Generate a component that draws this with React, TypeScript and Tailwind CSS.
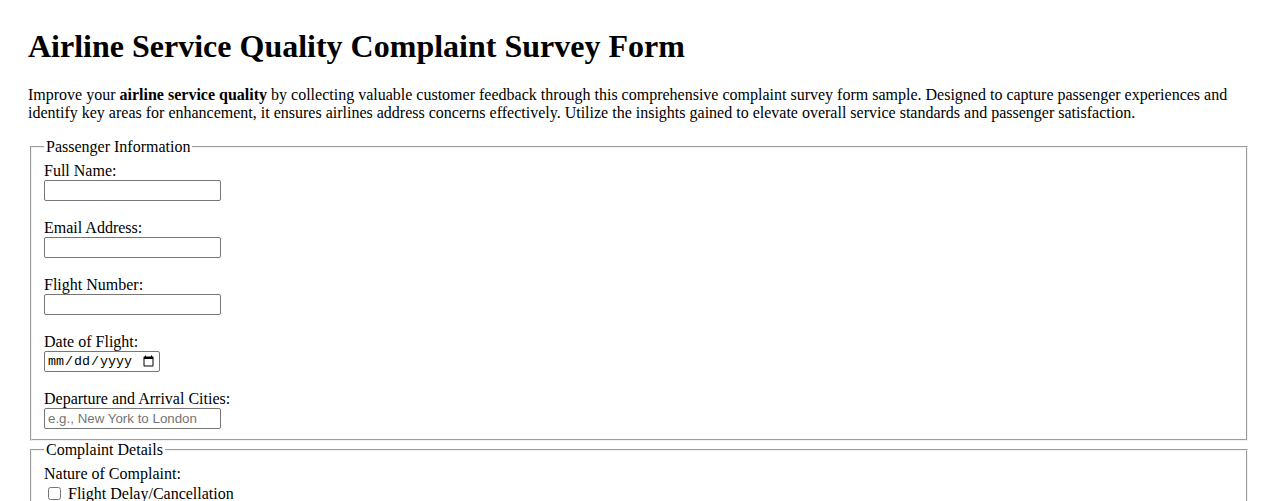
const serif = "font-['Liberation_Serif','Times_New_Roman',serif]";

const inputCls =
  "block h-[21px] w-[177px] rounded-[2px] border border-[#767676] bg-white px-[3px] py-[1px] font-['Liberation_Sans',Arial,sans-serif] text-[13.333px] leading-[normal] text-black placeholder:text-[#757575] outline-none";

function Field({
  label,
  id,
  type = "text",
  placeholder,
  last,
}: {
  label: string;
  id: string;
  type?: string;
  placeholder?: string;
  last?: boolean;
}) {
  return (
    <div className={last ? "" : "mb-[18px]"}>
      <label htmlFor={id} className="block">
        {label}
      </label>
      {type === "date" ? (
        <input
          id={id}
          type="date"
          className="block h-[21px] w-[116px] rounded-[2px] border border-[#767676] bg-white px-[2px] py-[1px] font-['Liberation_Mono','Courier_New',monospace] text-[13.333px] leading-[normal] text-black outline-none"
        />
      ) : (
        <input id={id} type={type} placeholder={placeholder} className={inputCls} />
      )}
    </div>
  );
}

function Box({ title, children }: { title: string; children: React.ReactNode }) {
  return (
    <fieldset className="mx-[2px] border-2 border-[rgb(240,240,240)] px-3 pt-[5.6px] pb-[10px] [border-style:groove]">
      <legend className="px-[2px]">{title}</legend>
      {children}
    </fieldset>
  );
}

const complaints = [
  "Flight Delay/Cancellation",
  "Lost or Damaged Baggage",
  "Customer Service",
  "In-flight Services",
  "Booking/Ticketing Issues",
  "Other",
];

export default function App() {
  return (
    <div className={`${serif} min-h-screen bg-white px-[28px] pt-[28px] pb-8 text-[16px] leading-[18px] text-black`}>
      <h1 className="mb-[21.44px] text-[32px] font-bold leading-[37px]">
        Airline Service Quality Complaint Survey Form
      </h1>
      <p className="mb-4">
        Improve your <strong>airline service quality</strong> by collecting valuable customer feedback
        through this comprehensive complaint survey form sample. Designed to capture passenger
        experiences and identify key areas for enhancement, it ensures airlines address concerns
        effectively. Utilize the insights gained to elevate overall service standards and passenger
        satisfaction.
      </p>
      <form>
        <Box title="Passenger Information">
          <Field id="name" label="Full Name:" />
          <Field id="email" label="Email Address:" type="email" />
          <Field id="flight" label="Flight Number:" />
          <Field id="date" label="Date of Flight:" type="date" />
          <Field id="cities" label="Departure and Arrival Cities:" placeholder="e.g., New York to London" last />
        </Box>
        <Box title="Complaint Details">
          <div className="mb-[18px]">
            <span className="block">Nature of Complaint:</span>
            {complaints.map((c) => (
              <label key={c} className="flex h-[20px] items-end">
                <input type="checkbox" className="mt-0 mr-[3px] mb-[3px] ml-[4px] h-[13px] w-[13px]" />
                <span className="ml-[4px]">{c}</span>
              </label>
            ))}
          </div>
          <label htmlFor="desc" className="block">
            Describe the Issue:
          </label>
          <textarea
            id="desc"
            rows={4}
            className="block w-[300px] rounded-[2px] border border-[#767676] px-[2px] py-[1px] font-['Liberation_Mono',monospace] text-[13.333px]"
          />
        </Box>
      </form>
    </div>
  );
}
